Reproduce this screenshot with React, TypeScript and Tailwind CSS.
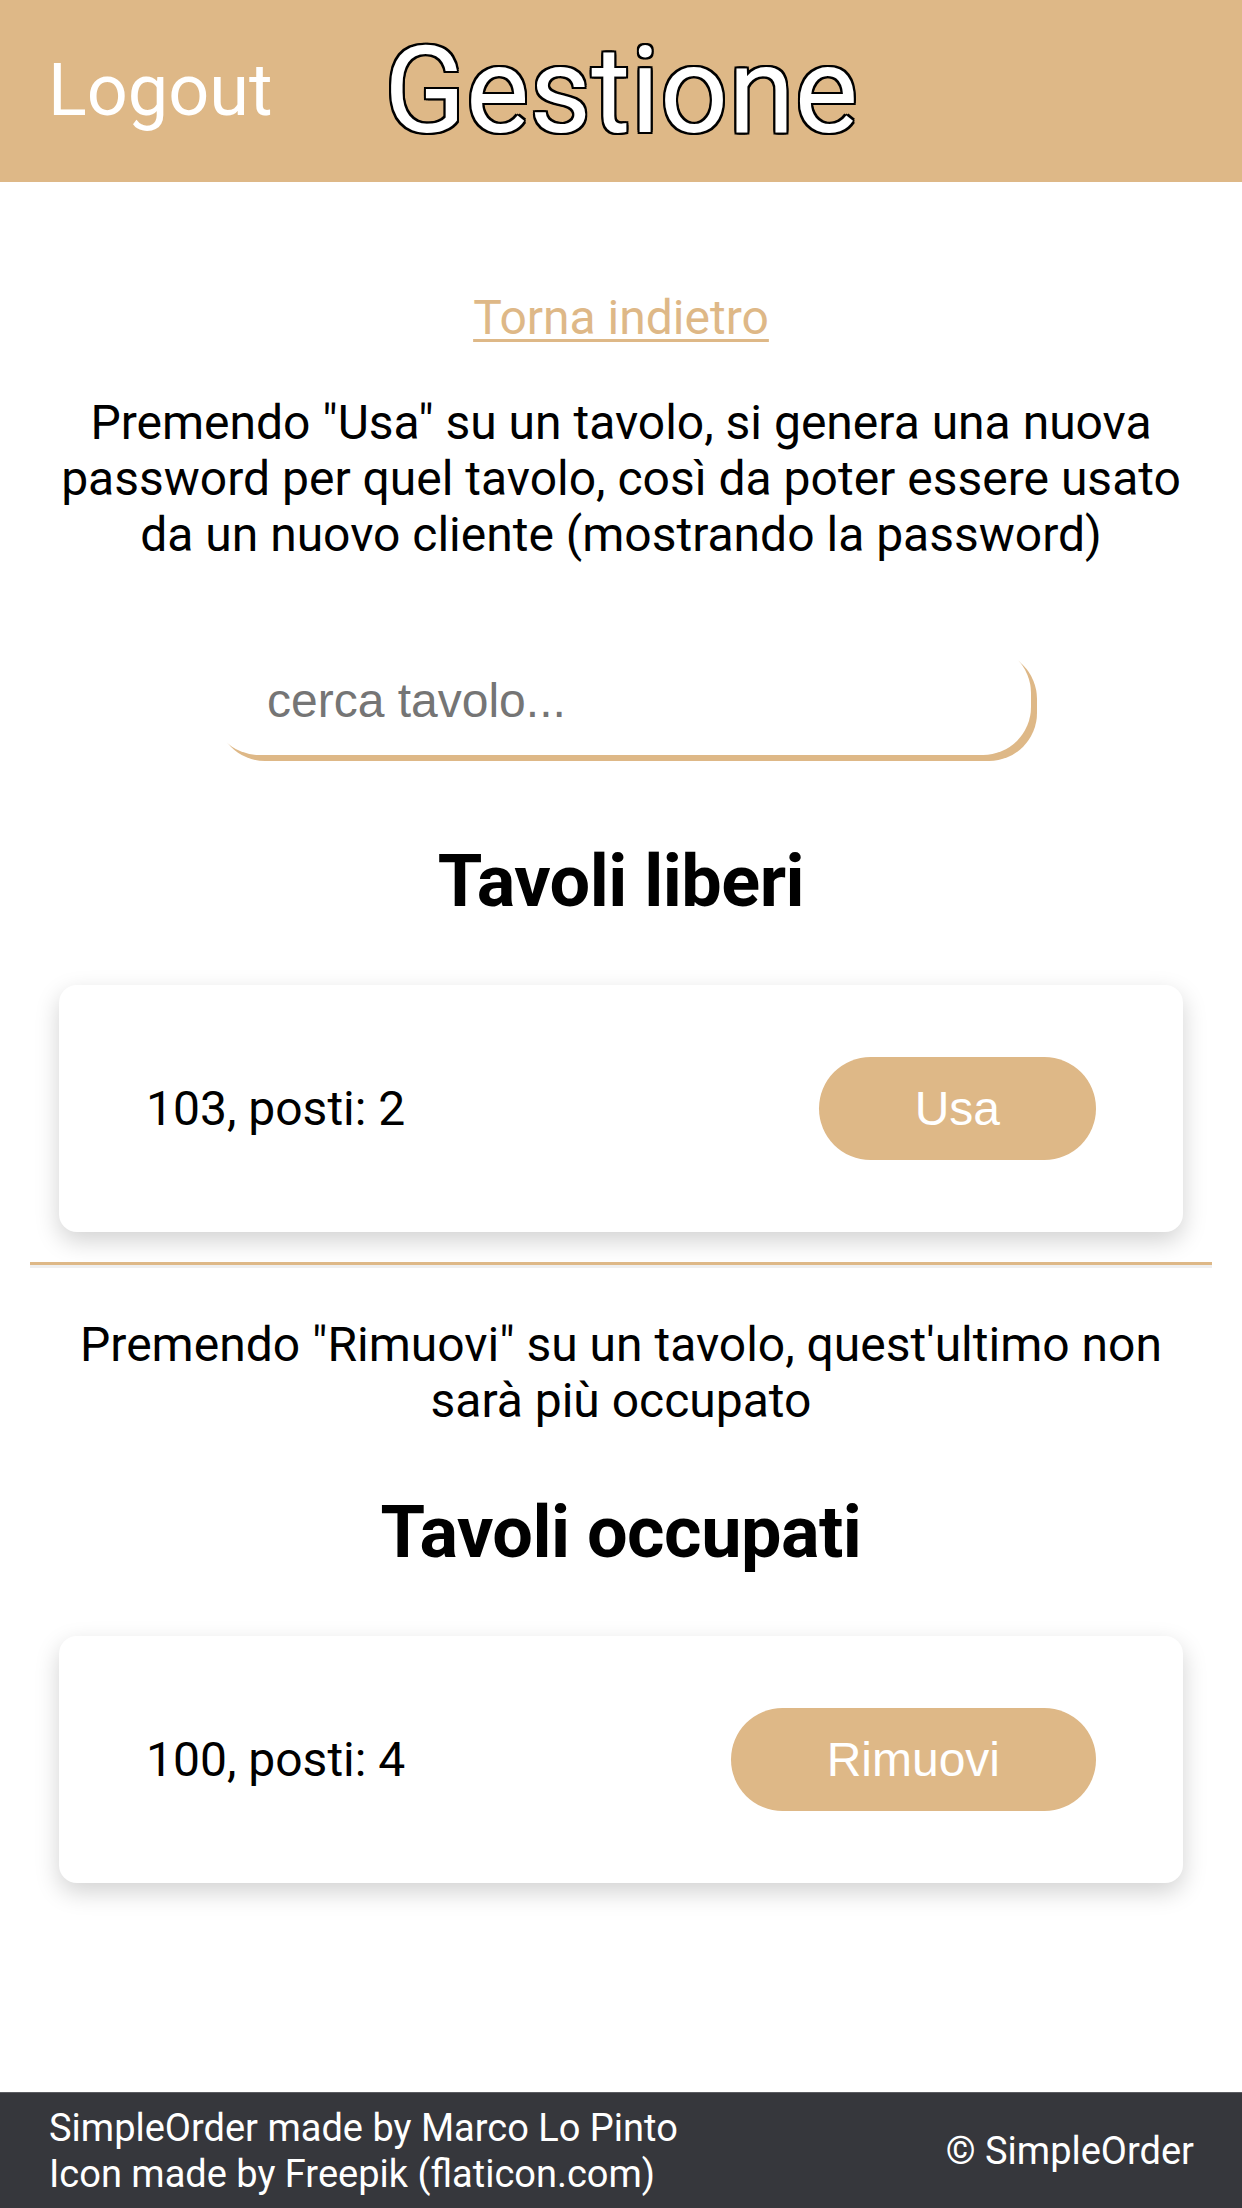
import React, { useState } from 'react';

interface Tavolo {
  numero: number;
  posti: number;
}

const liberi: Tavolo[] = [{ numero: 103, posti: 2 }];
const occupati: Tavolo[] = [{ numero: 100, posti: 4 }];

const TavoloCard: React.FC<{ tavolo: Tavolo; label: string; className?: string }> = ({ tavolo, label, className }) => (
  <div className={`mx-[29px] bg-white rounded-[18px] shadow-[0_9px_24px_rgba(0,0,0,0.18)] px-[87px] py-[72px] flex items-center justify-between ${className ?? ''}`}>
    <span className="text-[48px] leading-[56px] text-black">
      {tavolo.numero}, posti: {tavolo.posti}
    </span>
    <button
      type="button"
      className="bg-[#deb887] text-white rounded-full px-[96px] py-[24px] text-[48px] leading-[55px] font-['Liberation_Sans',Arial,sans-serif]"
    >
      {label}
    </button>
  </div>
);

const App: React.FC = () => {
  const [search, setSearch] = useState('');

  const filtra = (list: Tavolo[]) =>
    list.filter((t) => search.trim() === '' || String(t.numero).includes(search.trim()));

  return (
    <div className="min-h-screen w-full bg-white flex flex-col font-['Roboto','Liberation_Sans',sans-serif]">
      <header className="h-[182px] bg-[#deb887] grid grid-cols-[1fr_auto_1fr] items-center">
        <a href="#" className="pl-[48px] text-white text-[72px] leading-[84px] justify-self-start">Logout</a>
        <h1 className="text-white text-[120px] leading-[141px] font-normal [text-shadow:-2px_-2px_0_#000,2px_-2px_0_#000,-2px_2px_0_#000,2px_2px_0_#000,0_-2px_0_#000,0_2px_0_#000,-2px_0_0_#000,2px_0_0_#000]">
          Gestione
        </h1>
        <div />
      </header>

      <main className="flex flex-col px-[30px] pt-[108px] pb-[60px]">
        <a href="#" className="self-center text-[48px] leading-[56px] text-[#deb887] underline decoration-[3px] underline-offset-[5px]">
          Torna indietro
        </a>

        <p className="mt-[49px] px-[20px] text-center text-[48px] leading-[56px] text-black">
          Premendo "Usa" su un tavolo, si genera una nuova password per quel tavolo, così da poter essere usato da un nuovo cliente (mostrando la password)
        </p>

        <input
          value={search}
          onChange={(e) => setSearch(e.target.value)}
          placeholder="cerca tavolo..."
          className="mt-[82px] ml-[181px] w-[820px] h-[110px] bg-white rounded-[48px] shadow-[6px_6px_0_#deb887] pl-[56px] pr-[30px] text-[48px] text-black placeholder:text-[#757575] outline-none font-['Liberation_Sans',Arial,sans-serif]"
        />

        <h2 className="mt-[85px] text-center text-[72px] leading-[84px] font-bold tracking-[-0.5px] text-black">Tavoli liberi</h2>
        {filtra(liberi).map((t, i) => (
          <TavoloCard key={t.numero} tavolo={t} label="Usa" className={i === 0 ? 'mt-[61px]' : 'mt-[40px]'} />
        ))}

        <hr className="mt-[30px] border-0 border-t-[3px] border-t-[#deb887] border-b-[3px] border-b-[#efefef]" />

        <p className="mt-[49px] px-[20px] text-center text-[48px] leading-[56px] text-black">
          Premendo "Rimuovi" su un tavolo, quest'ultimo non sarà più occupato
        </p>

        <h2 className="mt-[62px] text-center text-[72px] leading-[84px] font-bold tracking-[-0.5px] text-black">Tavoli occupati</h2>
        {filtra(occupati).map((t, i) => (
          <TavoloCard key={t.numero} tavolo={t} label="Rimuovi" className={i === 0 ? 'mt-[61px]' : 'mt-[40px]'} />
        ))}
      </main>

      <footer className="mt-auto h-[116px] bg-[#36373c] border-t border-[#5c5d62] flex items-center justify-between pl-[49px] pr-[48px] text-white text-[38px] leading-[46px]">
        <div>
          <div>SimpleOrder made by Marco Lo Pinto</div>
          <div>Icon made by Freepik (flaticon.com)</div>
        </div>
        <div>© SimpleOrder</div>
      </footer>
    </div>
  );
};

export default App;
